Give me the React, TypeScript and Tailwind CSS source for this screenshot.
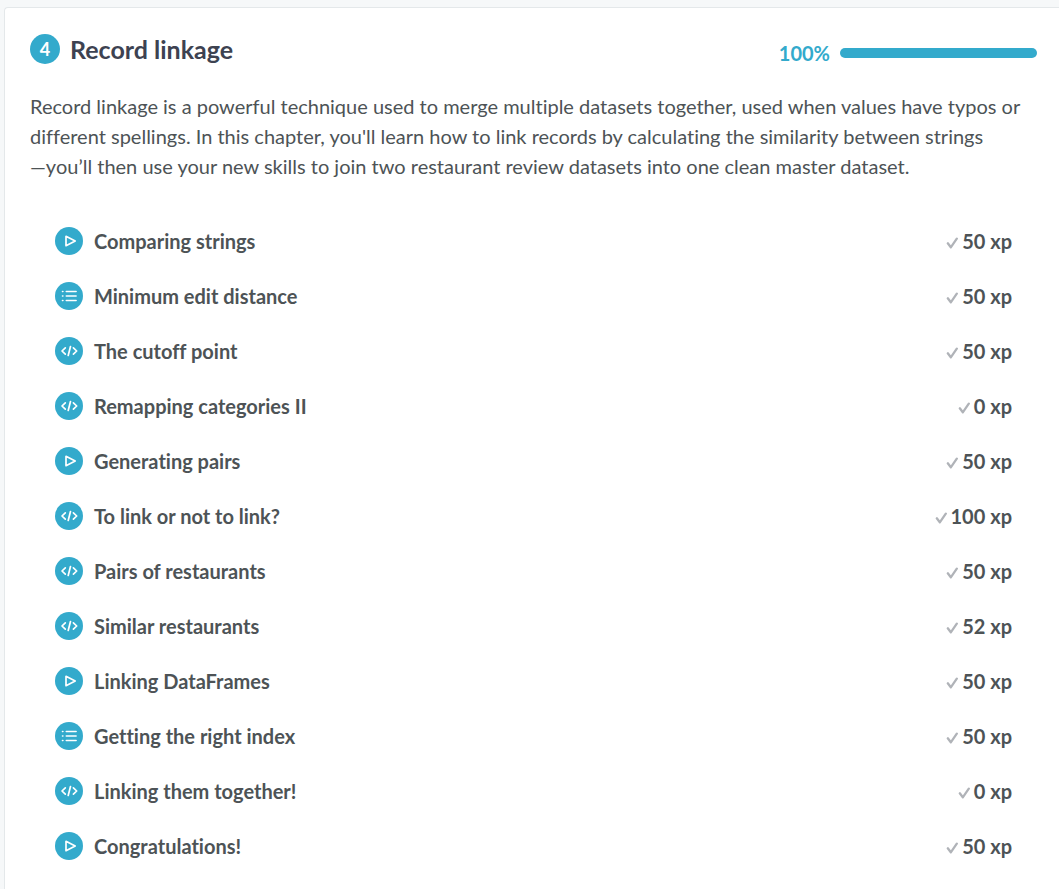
type Kind = "video" | "list" | "code";

const exercises: { title: string; xp: number; kind: Kind }[] = [
  { title: "Comparing strings", xp: 50, kind: "video" },
  { title: "Minimum edit distance", xp: 50, kind: "list" },
  { title: "The cutoff point", xp: 50, kind: "code" },
  { title: "Remapping categories II", xp: 0, kind: "code" },
  { title: "Generating pairs", xp: 50, kind: "video" },
  { title: "To link or not to link?", xp: 100, kind: "code" },
  { title: "Pairs of restaurants", xp: 50, kind: "code" },
  { title: "Similar restaurants", xp: 52, kind: "code" },
  { title: "Linking DataFrames", xp: 50, kind: "video" },
  { title: "Getting the right index", xp: 50, kind: "list" },
  { title: "Linking them together!", xp: 0, kind: "code" },
  { title: "Congratulations!", xp: 50, kind: "video" },
];

function KindIcon({ kind }: { kind: Kind }) {
  return (
    <svg viewBox="0 0 28 28" className="size-7 shrink-0" fill="none" stroke="white" aria-hidden="true">
      <circle cx="14" cy="14" r="14" fill="#33aacc" stroke="none" />
      {kind === "video" && (
        <path d="M11 9.300v9.400l9.200-4.700z" strokeWidth="1.7" strokeLinejoin="round" />
      )}
      {kind === "list" && (
        <path d="M7.500 9.500h.4M7.500 14h.4M7.500 18.500h.4M11.300 9.500h9.800M11.300 14h9.800M11.300 18.500h9.800" strokeWidth="1.6" strokeLinecap="round" />
      )}
      {kind === "code" && (
        <path d="M10.300 10.800L7 14l3.300 3.200M18.400 10.800l3.300 3.200-3.300 3.200M15.500 9.500l-2.300 9" strokeWidth="1.7" strokeLinecap="round" strokeLinejoin="round" />
      )}
    </svg>
  );
}

export default function App() {
  return (
    <div className="min-h-screen overflow-hidden bg-[#f6f8f9] pt-[7px] pl-1 font-['Lato',sans-serif] text-[#4d5356] [font-variant-ligatures:none]">
      <main className="min-h-screen rounded-tl border-t border-l border-[#e4e8ea] bg-white pt-[23px] pr-[22px] pl-[25px]">
        <header className="flex items-center justify-between">
          <div className="flex items-center gap-2.5">
            <span className="flex size-[30px] items-center justify-center rounded-full bg-[#33aacc] text-lg font-bold text-white">4</span>
            <h1 className="text-[25px] leading-9 font-bold text-[#3d4251]">Record linkage</h1>
          </div>
          <div className="flex items-center gap-2.5 pt-2">
            <span className="text-xl leading-7 font-bold text-[#33aacc]">100%</span>
            <div role="progressbar" aria-label="Chapter progress" aria-valuenow={100} className="h-2.5 w-[197px] rounded-full bg-[#33aacc]" />
          </div>
        </header>
        <p className="mt-6 text-xl leading-[30px]">
          Record linkage is a powerful technique used to merge multiple datasets together, used when values have typos or different spellings. In this chapter, you'll learn how to link records by calculating the similarity between strings
          <wbr />
          <span className="inline-block">—you’ll</span> then use your new skills to join two restaurant review datasets into one clean master dataset.
        </p>
        <ul className="mt-8 px-[25px]">
          {exercises.map((e) => (
            <li key={e.title}>
              <a href="#" className="flex h-[55px] items-center text-xl font-bold">
                <KindIcon kind={e.kind} />
                <span className="ml-[11px]">{e.title}</span>
                <svg viewBox="0 0 12 12" className="mt-1 mr-1 ml-auto size-3" fill="none" stroke="#b0b3b8" strokeWidth="2.300" strokeLinecap="round" strokeLinejoin="round" aria-hidden="true">
                  <path d="M1.800 6.300l3 4L10.800 1.700" />
                </svg>
                <span>{e.xp} xp</span>
              </a>
            </li>
          ))}
        </ul>
      </main>
    </div>
  );
}
